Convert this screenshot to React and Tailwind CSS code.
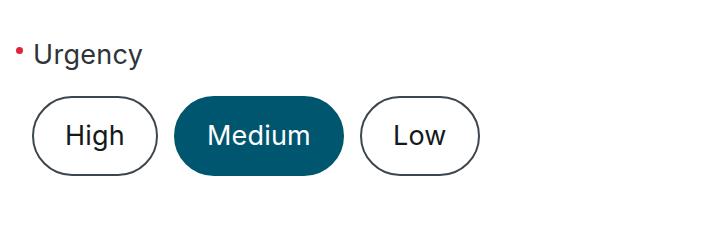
import React, { useState } from "react";

const options = ["High", "Medium", "Low"];

export default function App() {
  const [selected, setSelected] = useState("Medium");

  return (
    <div
      className="w-[722px] h-[208px] bg-white pt-[38px] pl-[16px]"
      style={{ fontFamily: "Inter, 'Noto Sans', sans-serif" }}
    >
      {/* Label with required dot */}
      <div className="flex items-start">
        <span className="mt-[9px] w-[7px] h-[7px] rounded-full bg-[#e0233a]" />
        <span className="ml-[10px] text-[27px] leading-[34px] tracking-[0.3px] text-[#2d343a]">
          Urgency
        </span>
      </div>

      {/* Options */}
      <div className="flex gap-4 mt-[24px] ml-[16px]">
        {options.map((opt) => (
          <button
            key={opt}
            onClick={() => setSelected(opt)}
            className={
              opt === selected
                ? "h-[80px] px-[31px] rounded-full bg-[#00566e] border-2 border-[#00566e] text-white text-[27px] tracking-[0.2px]"
                : "h-[80px] px-[31px] rounded-full bg-white border-2 border-[#3d464d] text-[#15191c] text-[27px] tracking-[0.2px]"
            }
          >
            {opt}
          </button>
        ))}
      </div>
    </div>
  );
}
